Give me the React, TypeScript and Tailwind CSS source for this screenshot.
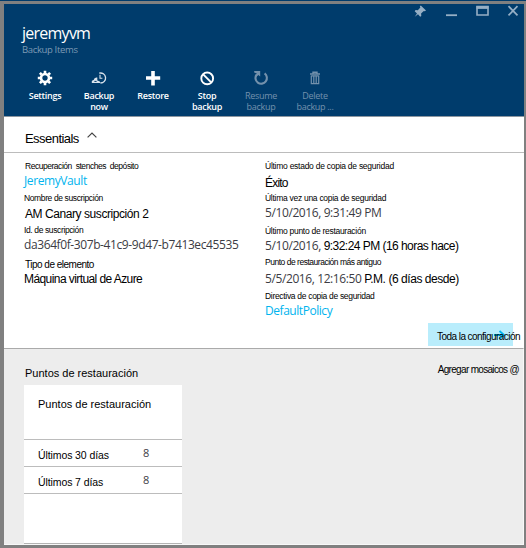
import type { ReactNode } from 'react';

const ARIAL = "font-['Liberation_Sans',Arial,sans-serif]";
const SEGOE = "font-['Open_Sans','Noto_Sans',sans-serif]";

function Command({ icon, lines, className }: { icon: ReactNode; lines: string[]; className: string }) {
  return (
    <button className={`flex w-[54px] flex-col items-center text-[9px] leading-[11px] tracking-[-0.3px] ${className}`}>
      <span className="mb-[4px] flex h-4 items-center justify-center">{icon}</span>
      {lines.map((line) => (
        <span key={line} className="whitespace-nowrap">{line}</span>
      ))}
    </button>
  );
}

function Line({ h, children, className = '' }: { h: string; children: ReactNode; className?: string }) {
  return <div className={`whitespace-nowrap leading-4 ${h} ${className}`}>{children}</div>;
}

const label = `${ARIAL} text-[8.5px] text-black`;
const value = `${ARIAL} text-[12px] text-black`;
const modern = `${SEGOE} text-[12px] text-[#3c3c44] tracking-[-0.4px]`;
const link = `${SEGOE} text-[12px] font-medium text-[#00b4ee]`;

export default function App() {
  return (
    <div className="flex h-[548px] w-[526px] flex-col overflow-hidden border-t border-[#003b6b] bg-[#808080] pt-[3px] pr-[2px] pb-[3px] pl-[4px]">
      <header className={`flex h-[112px] shrink-0 flex-col bg-[#003c6c] text-white ${SEGOE}`}>
        <div className="flex h-[17px] justify-end">
          <svg width="110" height="17" viewBox="414 4 110 17" fill="none" stroke="#96afc5">
            <path d="M420.5 5.2l5.2 5.1-1.2.8-1-.4-2.7 2.7.2 2.3-1.1.8-2.2-2.4-3.2 2.5 2.2-3.4-2.3-2.2.9-1.1 2.2.2 2.6-2.7-.6-1z" fill="#96afc5" stroke="none" transform="translate(0.3 0.2)" />
            <path d="M446 15.2h11" strokeWidth="1.8" />
            <path d="M477 6.5h11v8.5h-11z" strokeWidth="1.6" />
            <path d="M476.5 7.5h12" strokeWidth="2.8" />
            <path d="M508.5 6.2l9 9.2M517.5 6.2l-9 9.2" strokeWidth="1.7" />
          </svg>
        </div>
        <h1 className="ml-[18px] h-[22px] text-[16px] leading-[24px] tracking-[-0.75px]">jeremyvm</h1>
        <p className="ml-[18px] h-[15px] text-[9.5px] leading-[14px] tracking-[-0.35px] text-[#7d9ab4]">Backup Items</p>
        <div className="mt-[12px] ml-[14px] flex items-start">
          <Command
            className="font-semibold"
            lines={['Settings']}
            icon={
              <svg width="16" height="16" viewBox="-8 -8 16 16" stroke="#fff" fill="none">
                <circle r="4" strokeWidth="2.6" />
                <path d="M0-7.2V-5M0 5v2.2M-7.2 0H-5M5 0h2.2M-5.1-5.1l1.6 1.6M3.5 3.5l1.6 1.6M-5.1 5.1l1.6-1.6M3.5-3.5l1.6-1.6" strokeWidth="2.6" />
              </svg>
            }
          />
          <Command
            className="font-semibold"
            lines={['Backup', 'now']}
            icon={
              <svg width="16" height="16" viewBox="0 0 16 16" stroke="#d9e3ec" fill="none">
                <path d="M8.2 3.2A5 5 0 1 1 9.5 13" strokeWidth="1.3" />
                <path d="M9 4.7v3.6h2.4" strokeWidth="1.1" />
                <path d="M1 13a2 2 0 0 1 1.7-3A3 3 0 0 1 6.3 7.6v2.8l2.2.8 1.2 1.8z" fill="#d9e3ec" stroke="none" />
                <path d="M3.4 11.4h2.2" stroke="#003c6c" strokeWidth="1" />
              </svg>
            }
          />
          <Command
            className="font-semibold"
            lines={['Restore']}
            icon={
              <svg width="16" height="16" viewBox="0 0 16 16" fill="#fff">
                <path d="M6.2 1h3.6v5.3h5.4v3.5H9.8v5.6H6.2V9.8H1V6.3h5.2z" />
              </svg>
            }
          />
          <Command
            className="font-semibold"
            lines={['Stop', 'backup']}
            icon={
              <svg width="16" height="16" viewBox="0 0 16 16" fill="none" stroke="#fff" strokeWidth="1.9">
                <circle cx="8.2" cy="8.4" r="5.9" />
                <path d="M4.2 4.4l8 8" />
              </svg>
            }
          />
          <Command
            className="text-[#7391ac]"
            lines={['Resume', 'backup']}
            icon={
              <svg width="16" height="16" viewBox="0 0 16 16" fill="none" stroke="#7391ac">
                <path d="M11.6 3.4A5.7 5.7 0 1 1 3.6 4.6" strokeWidth="2.1" />
                <path d="M1.2 1h6v5.6L5.3 5 3.5 6.8 2.2 5.5 3.8 3.4 1.2 2.6z" fill="#7391ac" stroke="none" />
              </svg>
            }
          />
          <Command
            className="text-[#7391ac]"
            lines={['Delete', 'backup ...']}
            icon={
              <svg width="16" height="16" viewBox="0 0 16 16" fill="none" stroke="#7391ac">
                <path d="M3 4h10M6 3.2V2.2h4v1" strokeWidth="1.4" />
                <path d="M4.3 5.5v8.2h7.4V5.5M4.3 5.8h7.4M6.8 5.5v8M9.2 5.5v8" strokeWidth="1.2" />
              </svg>
            }
          />
        </div>
      </header>

      <main className="flex h-[429px] shrink-0 flex-col bg-white">
        <div className={`flex h-[37px] items-center border-t border-b border-t-[#8c96a0] border-b-[#bcbcbc] pl-[21px] ${ARIAL}`}>
          <h2 className="w-[62px] pt-[8px] text-[13px] leading-4 tracking-[-0.55px] text-black">Essentials</h2>
          <svg width="10" height="6" viewBox="0 0 10 6" fill="none" stroke="#444" strokeWidth="1.2">
            <path d="M.6 5.4L5 1l4.4 4.4" />
          </svg>
        </div>

        <section className="flex h-[170px]">
          <div className="w-[240px] pt-[5px] pl-[21px]">
            <Line h="h-[15px]" className={`${label} tracking-[-0.47px] [word-spacing:2px]`}>Recuperación stenches depósito</Line>
            <Line h="h-[17px]" className={`${link} -ml-px tracking-[-0.4px]`}>JeremyVault</Line>
            <Line h="h-[16px]" className={`${label} -ml-px tracking-[-0.38px]`}>Nombre de suscripción</Line>
            <Line h="h-[16px]" className={`${value} tracking-[-0.43px]`}>AM Canary suscripción 2</Line>
            <Line h="h-[15px]" className={`${label} -ml-px tracking-[-0.38px]`}>Id. de suscripción</Line>
            <Line h="h-[20px]" className={`${modern} -ml-px`}>da364f0f-307b-41c9-9d47-b7413ec45535</Line>
            <Line h="h-[14px]" className={`${ARIAL} text-[10px] tracking-[-0.5px] text-black`}>Tipo de elemento</Line>
            <Line h="h-[16px]" className={`${value} -ml-px tracking-[-0.58px]`}>Máquina virtual de Azure</Line>
          </div>
          <div className="pt-[5px] pl-[21px]">
            <Line h="h-[17px]" className={`${label} tracking-[-0.26px]`}>Último estado de copia de seguridad</Line>
            <Line h="h-[15px]" className={`${value} tracking-[-0.8px]`}>Éxito</Line>
            <Line h="h-[15px]" className={`${label} tracking-[-0.28px]`}>Última vez una copia de seguridad</Line>
            <Line h="h-[18px]" className={modern}>5/10/2016, 9:31:49 PM</Line>
            <Line h="h-[15px]" className={`${label} tracking-[-0.28px]`}>Último punto de restauración</Line>
            <Line h="h-[16px]" className={modern}>5/10/2016, <span className={`${value} tracking-[-0.54px]`}>9:32:24 PM (16 horas hace)</span></Line>
            <Line h="h-[17px]" className={`${label} tracking-[-0.48px]`}>Punto de restauración más antiguo</Line>
            <Line h="h-[17px]" className={modern}>5/5/2016, 12:16:50 <span className={`${value} tracking-[-0.45px]`}>P.M. (6 días desde)</span></Line>
            <Line h="h-[15px]" className={`${label} tracking-[-0.31px]`}>Directiva de copia de seguridad</Line>
            <Line h="h-[16px]" className={`${link} tracking-[-0.45px]`}>DefaultPolicy</Line>
          </div>
        </section>

        <div className="flex h-[25px] justify-end pr-[11px]">
          <div className={`relative h-[23px] w-[85px] bg-[#b9edfc] ${ARIAL}`}>
            <svg className="absolute top-[6px] left-[66px]" width="13" height="12" viewBox="0 0 13 12" fill="none" stroke="#00b4ee" strokeWidth="1.8">
              <path d="M0 6h10M5.5 2L10 6l-4.5 4" />
            </svg>
            <span className="absolute top-[6px] left-[9px] text-[10px] leading-4 tracking-[-0.55px] whitespace-nowrap text-black">Toda la configuración</span>
          </div>
        </div>

        <section className={`flex h-[197px] justify-between border-t border-r border-b border-t-[#aaa] border-r-[#f8f8f8] border-b-[#f8f8f8] bg-[#ededed] pl-[20px] text-black ${ARIAL}`}>
          <div>
            <h3 className="mt-[16px] h-[20px] pl-px text-[11px] leading-4">Puntos de restauración</h3>
            <div className="h-[159px] w-[158px] border-b border-[#b4b4b4] bg-white text-[11px]">
              <div className="h-[55px] border-b border-[#bcbcbc] pt-[11px] pl-[14px] leading-4">Puntos de restauración</div>
              <div className="flex h-[27px] border-b border-[#bcbcbc] pl-[14px] text-[10.5px]">
                <span className="w-[105px] pt-[7px] leading-4 tracking-[-0.1px]">Últimos 30 días</span>
                <span className={`pt-[5px] text-[11px] leading-4 text-[#3c3c44] ${SEGOE}`}>8</span>
              </div>
              <div className="flex h-[27px] border-b border-[#bcbcbc] pl-[14px] text-[10.5px]">
                <span className="w-[105px] pt-[7px] leading-4 tracking-[-0.1px]">Últimos 7 días</span>
                <span className={`pt-[5px] text-[11px] leading-4 text-[#3c3c44] ${SEGOE}`}>8</span>
              </div>
            </div>
          </div>
          <div className="pt-[13px] pr-[4px] text-[10px] leading-4 tracking-[-0.68px]">Agregar mosaicos @</div>
        </section>
      </main>
    </div>
  );
}
